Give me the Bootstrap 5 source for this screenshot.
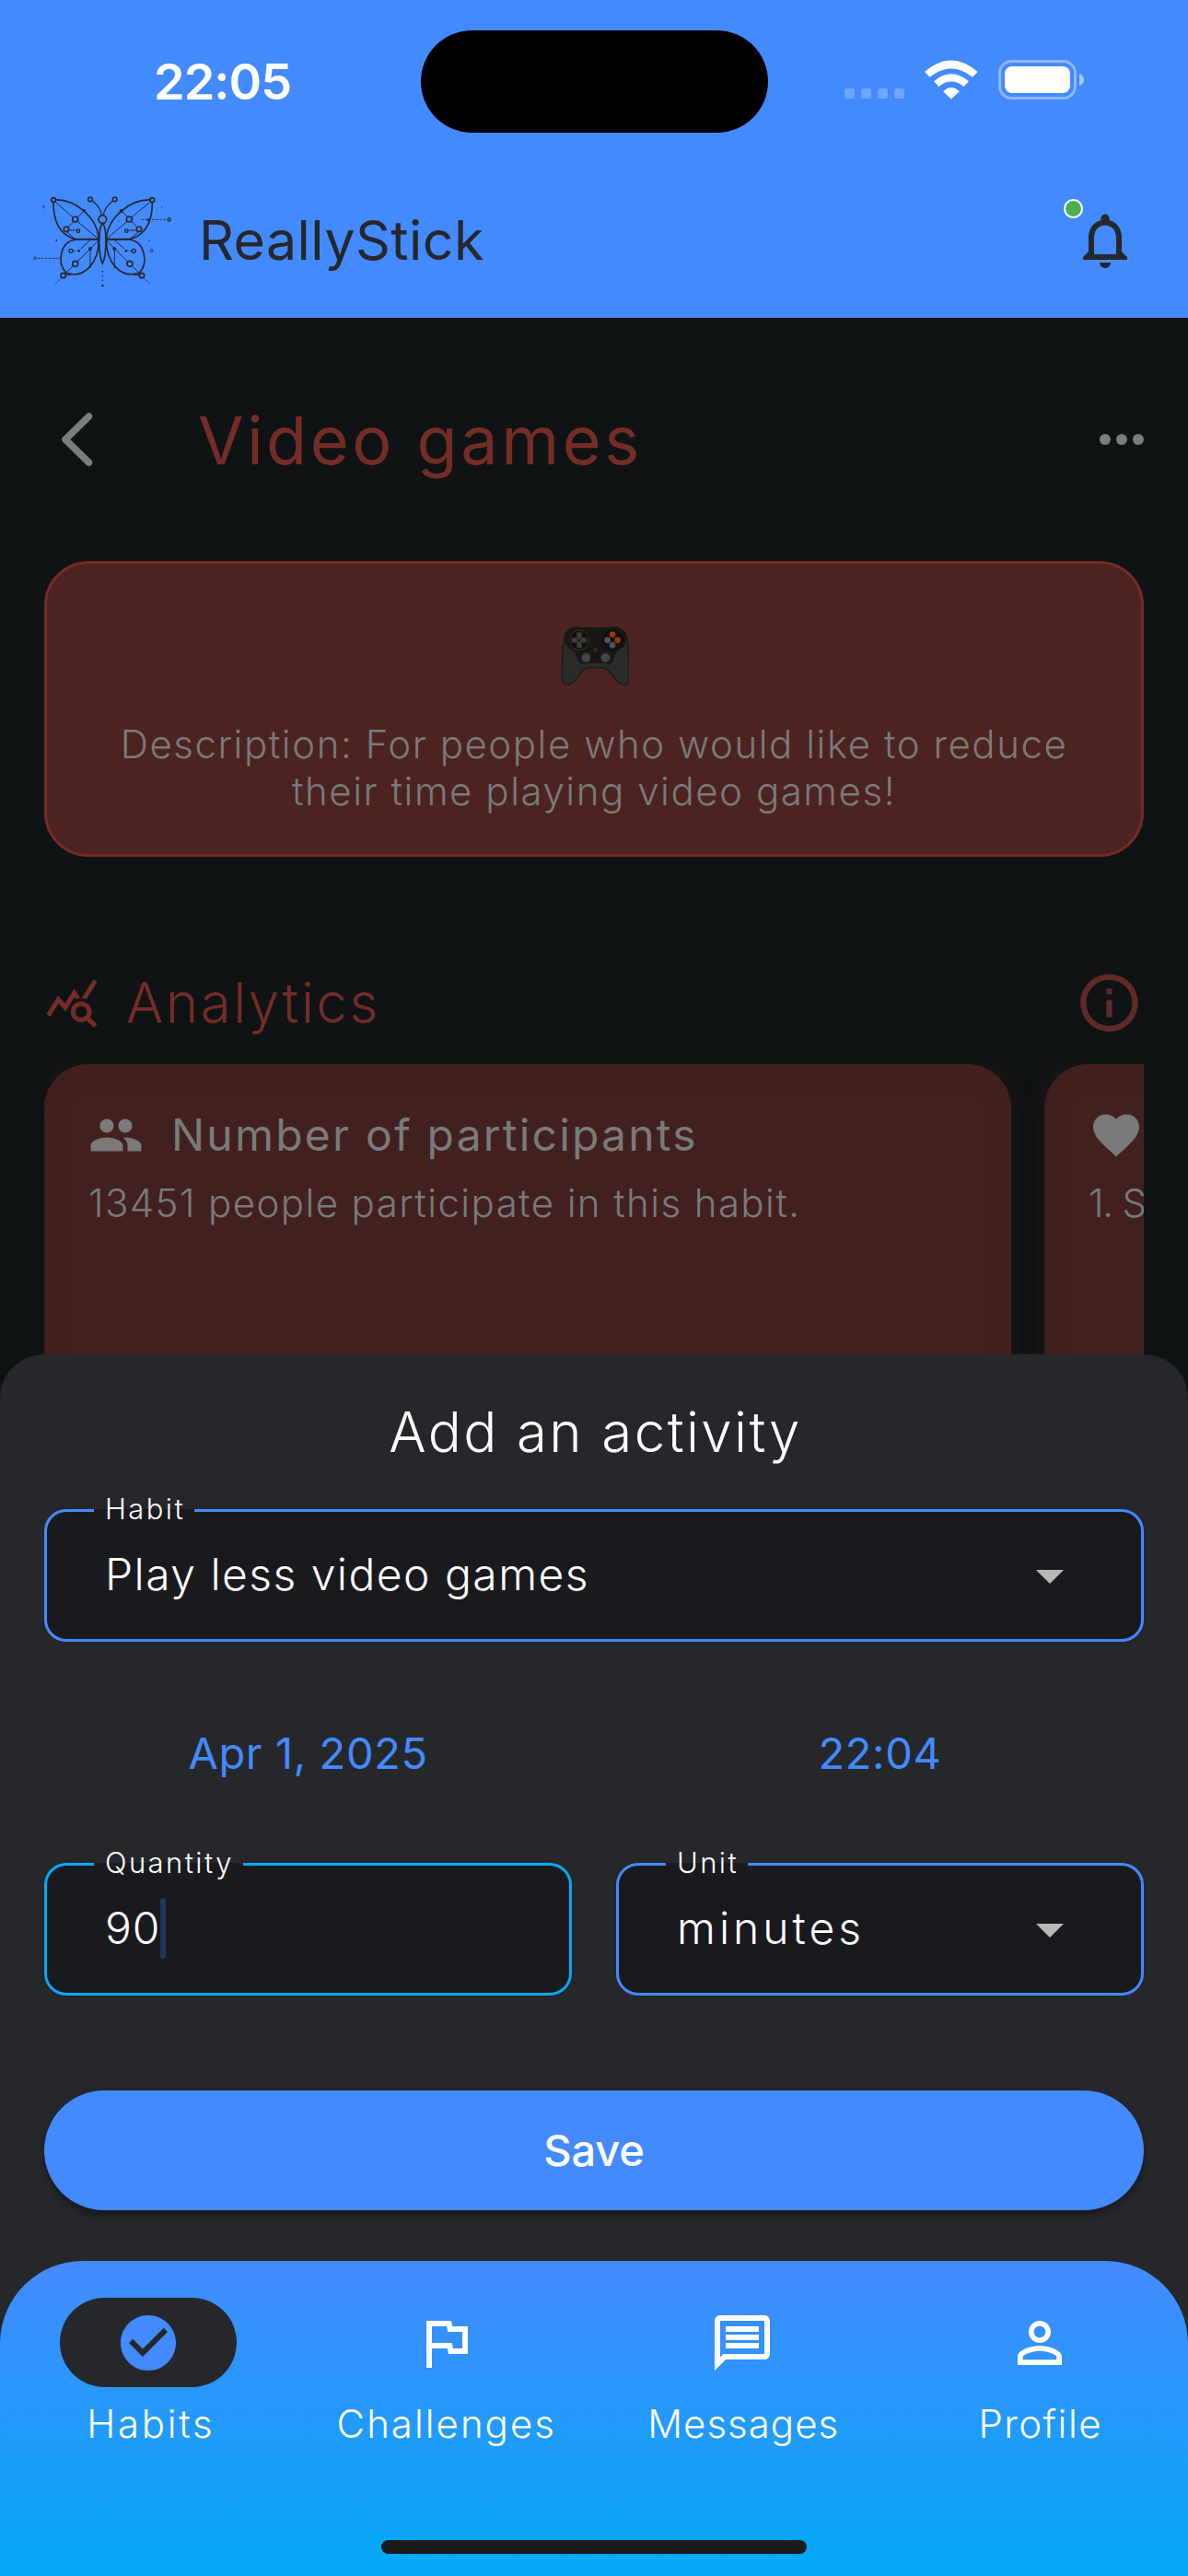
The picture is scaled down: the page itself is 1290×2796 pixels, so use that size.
<!DOCTYPE html>
<html lang="en">
<head>
<meta charset="utf-8">
<meta name="viewport" content="width=device-width, initial-scale=1">
<title>ReallyStick</title>
<link href="https://cdn.jsdelivr.net/npm/bootstrap@5.3.0/dist/css/bootstrap.min.css" rel="stylesheet">
<style>
  :root { --app-blue: #448aff; --app-sheet: #26272b; --app-field: #191a1e; --app-back: #101314; --app-red: #742c26; --app-dim: #7a7a7a; }
  html, body { width: 1290px; height: 2796px; overflow: hidden; }
  body { background: var(--app-back); font-family: Inter, "Liberation Sans", sans-serif; font-weight: 300; font-size: 42px; line-height: 51px; color: #fff; }
  svg { display: block; flex: none; }

  .app-header { height: 345px; background: var(--app-blue); }
  .status-bar { height: 177px; padding: 0 113px 0 167px; }
  .status-time { font-size: 54px; font-weight: 600; letter-spacing: -1px; width: 290px; }
  .island { width: 377px; height: 111px; background: #000; }
  .brand-bar { height: 168px; padding: 0 54px 0 36px; }
  .brand-name { font-size: 59px; font-weight: 400; letter-spacing: .46px; margin: -2px 0 0 30px; color: #26272b; }
  .alert-dot { position: absolute; left: -9px; top: -9px; width: 21px; height: 21px; background: #4caf50; border: 2px solid #fff; }

  .title-row { height: 264px; padding: 0 48px 0 66px; }
  .habit-title { font-size: 72px; font-weight: 400; letter-spacing: 3.5px; color: var(--app-red); margin-left: 114px; }
  .description-card { height: 321px; margin: 0 48px; padding: 67px 60px 0; border: 3px solid var(--app-red); border-radius: 48px; background: #4c2320; color: var(--app-dim); }
  .description-text { letter-spacing: 1.54px; margin-top: 38px; }
  .section-row { height: 130px; margin: 93px 48px 2px; color: var(--app-red); }
  .section-title { font-size: 60px; letter-spacing: 2.5px; margin-left: 29px; }
  .card-strip { height: 315px; margin: 0 48px; gap: 36px; overflow: hidden; color: var(--app-dim); }
  .stat-card { flex: none; width: 1050px; height: 380px; padding: 47px 48px; border-radius: 48px; background: #42201f; box-shadow: 0 0 26px rgba(66, 32, 31, .32), inset 0 0 26px #3e211d; }
  .stat-title { font-size: 48px; font-weight: 400; letter-spacing: 2.2px; margin: -2px 0 0 30px; }
  .stat-text { letter-spacing: 1.4px; margin-top: 18px; white-space: nowrap; }
  .stat-text-next { letter-spacing: -1.2px; }

  .sheet { background: var(--app-sheet); border-radius: 48px 48px 0 0; }
  .sheet-body { padding: 48px 48px 55px; }
  .sheet-title { font-size: 60px; line-height: 72px; letter-spacing: 2.4px; margin-bottom: 48px; padding-left: 3px; }
  .field { position: relative; height: 144px; padding: 0 84px 3px 63px; border: 3px solid var(--app-blue); border-radius: 24px; background: var(--app-field); font-size: 48px; letter-spacing: 1.45px; }
  .field-focus { border-color: #03a9f4; }
  .field-label { position: absolute; left: 51px; top: -21px; padding: 0 10px 0 12px; font-size: 31px; line-height: 36px; letter-spacing: 2.4px; background: linear-gradient(var(--app-field), var(--app-field)) 0 18px / 100% 3px no-repeat; }
  .caret { width: 6px; height: 66px; border-radius: 3px; background: #20345c; }
  .amount { letter-spacing: .8px; }
  .unit-name { letter-spacing: 4px; }
  .when-row { height: 240px; gap: 48px; font-size: 47px; font-weight: 400; letter-spacing: .6px; color: var(--app-blue); }
  .field-row { gap: 48px; }
  .save-btn { height: 130px; margin-top: 103px; font-size: 47px; font-weight: 500; letter-spacing: -.1px; color: #fff; background: var(--app-blue); border: 0; box-shadow: 0 6px 10px rgba(0, 0, 0, .35); }

  .bottom-nav { height: 342px; padding-top: 40px; border-radius: 90px 90px 0 0; background: linear-gradient(#448aff, #03a9f4); }
  .nav-pill { width: 192px; height: 97px; margin-bottom: 14px; }
  .nav-pill-on { background: var(--app-sheet); }
  .tab-habits { letter-spacing: 2.7px; padding-left: 5px; } .tab-challenges { letter-spacing: 2px; padding-left: 2px; } .tab-messages { letter-spacing: 1px; padding-left: 2px; } .tab-profile { letter-spacing: 1.5px; padding-left: 2px; }
  .home-bar { width: 462px; height: 15px; margin-top: 101px; background: #1c1c1c; }
</style>
</head>
<body>
<header class="app-header">
  <div class="status-bar d-flex align-items-center">
    <div class="status-time">22:05</div>
    <div class="island rounded-pill"></div>
    <div class="d-flex align-items-center ms-auto">
      <svg width="65" height="11" viewBox="0 0 65 11" fill="#fff" fill-opacity=".24" style="margin-top:26px"><rect width="11" height="11" rx="3"/><rect x="18" width="11" height="11" rx="3"/><rect x="36" width="11" height="11" rx="3"/><rect x="54" width="11" height="11" rx="3"/></svg>
      <svg width="58" height="43" viewBox="371 74 173 128" fill="#fff" style="margin:-5px 0 0 22px"><path d="M371 113Q457 37 543 113L526 130Q457 74 388 130Z"/><path d="M401 143Q457 96 514 143L498 160Q457 128 417 160Z"/><path d="M431 176Q457 150 484 176L457 201Z"/></svg>
      <svg width="93" height="43" viewBox="0 0 93 43" style="margin:-4px 0 0 22px"><rect x="1.5" y="1.5" width="82" height="40" rx="13" fill="none" stroke="#fff" stroke-opacity=".4" stroke-width="3"/><rect x="7" y="7" width="71" height="29" rx="8" fill="#fff"/><path d="M88 15q5 1.500 5 6.500t-5 6.500z" fill="#fff" fill-opacity=".5"/></svg>
    </div>
  </div>
  <div class="brand-bar d-flex align-items-center">
    <svg width="150" height="102" viewBox="48 60 450 306" fill="none" stroke="#26272b" stroke-width="5">
      <path d="M114 81C185 75 258 140 262 209H185C135 195 112 150 114 81ZM436 81C365 75 290 140 286 209H363C415 195 438 150 436 81Z"/>
      <path d="M262 210H185C135 218 125 285 155 318C215 340 262 285 262 210ZM286 210H363C413 218 423 285 395 318C333 340 286 285 286 210Z"/>
      <path d="M274 158Q263 166 263 220Q264 270 274 288Q284 270 285 220Q285 166 274 158Z"/>
      <path d="M242 85Q268 106 271 131M307 85Q280 106 277 131M146 325H172M402 325H376" stroke-width="4"/>
      <path d="M120 87L178 138M191 150L262 209M214 116L162 170M155 183L185 209M430 87L368 138M355 150L286 209M335 116L387 170M393 183L363 209M262 212L191 283M178 296L151 321M286 212L357 283M370 296L397 321M234 240V303M313 240V303M203 240L236 210M345 240L311 210M162 180H188M386 180H358" stroke-width="3"/>
      <path d="M400 145H484M62 271H140M178 247H197M370 247H350M142 333L121 353M406 333L427 353" stroke-width="2.500" stroke-dasharray="8 4"/>
      <g fill="#448aff"><circle cx="114" cy="81" r="7"/><circle cx="436" cy="81" r="7"/><circle cx="234" cy="79" r="7"/><circle cx="314" cy="79" r="7"/><circle cx="274" cy="144" r="13"/><circle cx="185" cy="144" r="9"/><circle cx="361" cy="144" r="9"/><circle cx="156" cy="176" r="8"/><circle cx="393" cy="176" r="8"/><circle cx="185" cy="289" r="9"/><circle cx="363" cy="289" r="9"/><circle cx="146" cy="327" r="8"/><circle cx="402" cy="327" r="8"/></g>
      <g fill="#448aff" stroke-width="4"><circle cx="195" cy="182" r="5"/><circle cx="352" cy="182" r="5"/><circle cx="171" cy="247" r="6"/><circle cx="376" cy="247" r="6"/><circle cx="491" cy="145" r="5"/></g>
      <g stroke-width="2.500"><circle cx="54" cy="271" r="4"/><circle cx="434" cy="246" r="4.500"/><circle cx="82" cy="103" r="3"/></g>
      <g fill="#26272b" stroke="none"><circle cx="234" cy="240" r="6"/><circle cx="313" cy="240" r="6"/><circle cx="214" cy="116" r="5"/><circle cx="335" cy="117" r="6"/><circle cx="197" cy="247" r="4"/><circle cx="350" cy="247" r="4"/><circle cx="423" cy="146" r="4"/><circle cx="124" cy="213" r="3"/><circle cx="427" cy="213" r="2"/><circle cx="467" cy="103" r="2"/><circle cx="82" cy="127" r="1.500"/><circle cx="326" cy="150" r="2"/><circle cx="274" cy="314" r="2.500"/><circle cx="274" cy="328" r="2.500"/><circle cx="274" cy="343" r="2.500"/><circle cx="274" cy="360" r="4"/></g>
    </svg>
    <div class="brand-name">ReallyStick</div>
    <div class="position-relative ms-auto">
      <svg width="72" height="72" viewBox="0 0 24 24" fill="#26272b"><path d="M12 22c1.100 0 2-.9 2-2h-4c0 1.100.9 2 2 2zm6-6v-5c0-3.070-1.630-5.640-4.500-6.320V4c0-.83-.67-1.500-1.500-1.500s-1.500.67-1.500 1.500v.68C7.640 5.360 6 7.920 6 11v5l-2 2v1h16v-1l-2-2zm-2 1H8v-6c0-2.480 1.510-4.500 4-4.500s4 2.020 4 4.500v6z"/></svg>
      <span class="alert-dot rounded-circle"></span>
    </div>
  </div>
</header>

<main>
  <div class="title-row d-flex align-items-center">
    <svg width="35" height="58" viewBox="0 0 35 58" fill="none" stroke="#7c7d7d" stroke-width="7.500" stroke-linecap="round" stroke-linejoin="round"><path d="M30.500 4L5 29L30.500 54"/></svg>
    <div class="habit-title">Video games</div>
    <svg class="ms-auto" width="48" height="12" viewBox="0 0 48 12" fill="#7c7d7d"><circle cx="6" cy="6" r="6"/><circle cx="24" cy="6" r="6"/><circle cx="42" cy="6" r="6"/></svg>
  </div>

  <section class="description-card text-center">
    <svg class="mx-auto" width="76" height="65" viewBox="141 84 228 194">
      <path d="M173 98Q190 84 211 91H309Q330 84 347 98Q364 108 367 165L370 250Q368 277 349 276Q336 274 325 258L297 226Q292 221 282 221H236Q226 221 221 226L196 258Q184 274 171 276Q152 277 150 250L153 165Q156 108 173 98Z" fill="#292b29" stroke="#191a18" stroke-width="4"/>
      <path d="M173 98Q190 84 211 91H309Q330 84 347 98Q361 106 361 130Q358 155 333 165Q322 173 318 200Q305 215 290 206H231Q214 215 203 200Q196 172 184 164Q160 155 159 130Q160 106 173 98Z" fill="#151816"/>
      <circle cx="207" cy="131" r="32" fill="#111" stroke="#532613" stroke-width="3"/><circle cx="315" cy="131" r="34" fill="#101110"/>
      <path d="M199 106h16v17h16v16h-16v17h-16v-17h-17v-16h17z" fill="#3d3e3c"/><path d="M199 123l16 16m0-16l-16 16" stroke="#111" stroke-width="3"/>
      <circle cx="299" cy="131" r="10" fill="#555"/><circle cx="315" cy="147" r="10" fill="#555"/><circle cx="315" cy="113" r="10" fill="#943d05"/><circle cx="332" cy="131" r="10" fill="#943d05"/>
      <circle cx="260" cy="163" r="5" fill="#38200f" stroke="#743109" stroke-width="2.500"/>
      <circle cx="229" cy="188" r="16" fill="#454543" stroke="#222" stroke-width="4"/><circle cx="292" cy="188" r="16" fill="#454543" stroke="#222" stroke-width="4"/>
    </svg>
    <div class="description-text">Description: For people who would like to reduce<br>their time playing video games!</div>
  </section>

  <div class="section-row d-flex align-items-center">
    <svg width="60" height="60" viewBox="0 0 24 24" fill="currentColor"><path d="M19.880 18.470c.44-.7.7-1.510.7-2.390 0-2.490-2.010-4.500-4.500-4.500s-4.500 2.010-4.500 4.500 2.010 4.500 4.490 4.500c.88 0 1.700-.26 2.390-.7L21.580 23 23 21.580l-3.120-3.110zm-3.800.11c-1.380 0-2.500-1.120-2.500-2.500s1.120-2.500 2.500-2.500 2.500 1.120 2.500 2.500-1.120 2.500-2.500 2.500zm-.36-8.500c-.74.02-1.450.18-2.100.45l-.55-.83-3.800 6.180-3.010-3.520-3.630 5.810L1 17l5-8 3 3.500L13 6l2.720 4.080zm2.590.5c-.64-.28-1.330-.45-2.050-.49L21.380 2 23 3.180l-4.690 7.400z"/></svg>
    <div class="section-title">Analytics</div>
    <svg class="ms-auto" width="75" height="75" viewBox="0 0 24 24" fill="#5f2a25"><path d="M11 7h2v2h-2zm0 4h2v6h-2zm1-9C6.480 2 2 6.480 2 12s4.480 10 10 10 10-4.480 10-10S17.520 2 12 2zm0 18c-4.410 0-8-3.590-8-8s3.590-8 8-8 8 3.590 8 8-3.590 8-8 8z"/></svg>
  </div>

  <div class="card-strip d-flex">
    <article class="stat-card">
      <div class="d-flex align-items-center">
        <svg width="60" height="60" viewBox="0 0 24 24" fill="currentColor"><path d="M16 11c1.660 0 2.990-1.340 2.990-3S17.660 5 16 5s-3 1.340-3 3 1.340 3 3 3zm-8 0c1.660 0 2.990-1.340 2.990-3S9.660 5 8 5 5 6.340 5 8s1.340 3 3 3zm0 2c-2.330 0-7 1.170-7 3.500V19h14v-2.500c0-2.330-4.670-3.500-7-3.500zm8 0c-.29 0-.62.02-.97.05 1.160.84 1.970 1.970 1.970 3.450V19h6v-2.500c0-2.330-4.670-3.500-7-3.500z"/></svg>
        <div class="stat-title">Number of participants</div>
      </div>
      <div class="stat-text">13451 people participate in this habit.</div>
    </article>
    <article class="stat-card">
      <svg width="60" height="60" viewBox="0 0 24 24" fill="currentColor"><path d="M12 21.350l-1.450-1.320C5.400 15.360 2 12.280 2 8.500 2 5.420 4.420 3 7.500 3c1.740 0 3.410.81 4.500 2.090C13.090 3.810 14.760 3 16.500 3 19.580 3 22 5.420 22 8.500c0 3.780-3.400 6.860-8.550 11.540L12 21.350z"/></svg>
      <div class="stat-text stat-text-next">1. S</div>
    </article>
  </div>
</main>

<section class="sheet">
  <div class="sheet-body">
    <div class="sheet-title text-center">Add an activity</div>
    <div class="field d-flex align-items-center">
      <span class="field-label">Habit</span>
      <span>Play less video games</span>
      <svg class="ms-auto" width="30" height="15" viewBox="0 0 30 15" fill="#b8b8b9" style="margin-top:5px"><path d="M0 0H30L15 15Z"/></svg>
    </div>
    <div class="when-row d-flex align-items-center text-center">
      <div class="flex-fill w-50">Apr 1, 2025</div>
      <div class="flex-fill w-50">22:04</div>
    </div>
    <div class="field-row d-flex">
      <div class="field field-focus d-flex align-items-center w-50">
        <span class="field-label">Quantity</span>
        <span class="amount">90</span><span class="caret"></span>
      </div>
      <div class="field d-flex align-items-center w-50">
        <span class="field-label">Unit</span>
        <span class="unit-name">minutes</span>
        <svg class="ms-auto" width="30" height="15" viewBox="0 0 30 15" fill="#b8b8b9" style="margin-top:5px"><path d="M0 0H30L15 15Z"/></svg>
      </div>
    </div>
    <button class="save-btn btn rounded-pill w-100" type="button">Save</button>
  </div>

  <nav class="bottom-nav">
    <div class="d-flex text-center">
      <div class="w-25 d-flex flex-column align-items-center">
        <div class="nav-pill nav-pill-on rounded-pill d-flex align-items-center justify-content-center"><svg width="72" height="72" viewBox="0 0 24 24" fill="#448aff"><path d="M12 2C6.480 2 2 6.480 2 12s4.480 10 10 10 10-4.480 10-10S17.520 2 12 2zm-2 15l-5-5 1.410-1.410L10 14.170l7.590-7.590L19 8l-9 9z"/></svg></div>
        <div class="tab-habits">Habits</div>
      </div>
      <div class="w-25 d-flex flex-column align-items-center">
        <div class="nav-pill d-flex align-items-center justify-content-center"><svg width="72" height="72" viewBox="0 0 24 24" fill="#fff"><path d="M12.360 6l.4 2H18v6h-3.360l-.4-2H7V6h5.360M14 4H5v17h2v-7h5.600l.4 2h7V6h-5.600L14 4z"/></svg></div>
        <div class="tab-challenges">Challenges</div>
      </div>
      <div class="w-25 d-flex flex-column align-items-center">
        <div class="nav-pill d-flex align-items-center justify-content-center"><svg width="72" height="72" viewBox="0 0 24 24" fill="#fff"><path d="M4 4h16v12H5.170L4 17.170V4m0-2c-1.100 0-1.990.9-1.990 2L2 22l4-4h14c1.100 0 2-.9 2-2V4c0-1.100-.9-2-2-2H4zm2 10h12v2H6v-2zm0-3h12v2H6V9zm0-3h12v2H6V6z"/></svg></div>
        <div class="tab-messages">Messages</div>
      </div>
      <div class="w-25 d-flex flex-column align-items-center">
        <div class="nav-pill d-flex align-items-center justify-content-center"><svg width="72" height="72" viewBox="0 0 24 24" fill="#fff"><path d="M12 5.900c1.160 0 2.100.94 2.100 2.100s-.94 2.100-2.100 2.100S9.900 9.160 9.900 8s.94-2.100 2.100-2.100m0 9c2.970 0 6.100 1.460 6.100 2.100v1.100H5.900V17c0-.64 3.130-2.100 6.100-2.100M12 4C9.790 4 8 5.790 8 8s1.790 4 4 4 4-1.790 4-4-1.790-4-4-4zm0 9c-2.670 0-8 1.340-8 4v3h16v-3c0-2.660-5.330-4-8-4z"/></svg></div>
        <div class="tab-profile">Profile</div>
      </div>
    </div>
    <div class="home-bar rounded-pill mx-auto"></div>
  </nav>
</section>
<script src="https://cdn.jsdelivr.net/npm/bootstrap@5.3.0/dist/js/bootstrap.bundle.min.js"></script>
</body>
</html>
